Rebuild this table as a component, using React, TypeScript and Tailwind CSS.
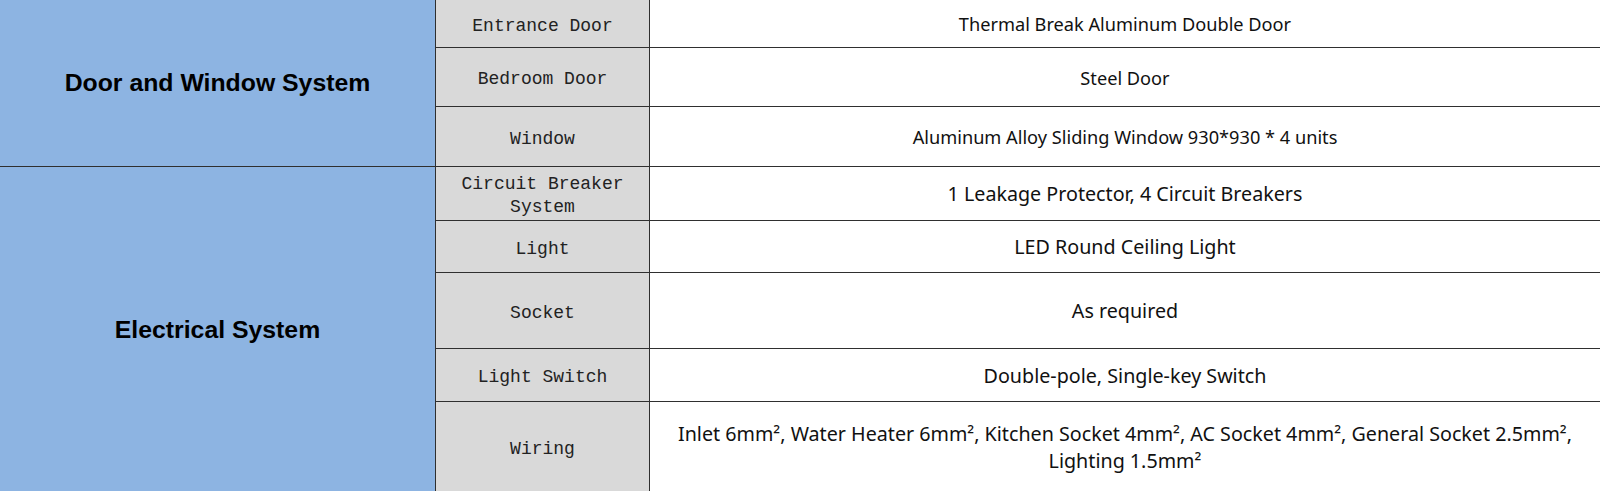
import React from 'react';

interface Row {
  label: string;
  value: string;
  height: string;
}

const doorRows: Row[] = [
  { label: 'Entrance Door', value: 'Thermal Break Aluminum Double Door', height: 'h-[48px]' },
  { label: 'Bedroom Door', value: 'Steel Door', height: 'h-[59px]' },
  { label: 'Window', value: 'Aluminum Alloy Sliding Window 930*930 * 4 units', height: 'h-[59px]' },
];

const electricalRows: Row[] = [
  { label: 'Circuit Breaker System', value: '1 Leakage Protector, 4 Circuit Breakers', height: 'h-[54px]' },
  { label: 'Light', value: 'LED Round Ceiling Light', height: 'h-[52px]' },
  { label: 'Socket', value: 'As required', height: 'h-[76px]' },
  { label: 'Light Switch', value: 'Double-pole, Single-key Switch', height: 'h-[53px]' },
  {
    label: 'Wiring',
    value: 'Inlet 6mm², Water Heater 6mm², Kitchen Socket 4mm², AC Socket 4mm², General Socket 2.5mm², Lighting 1.5mm²',
    height: 'h-[90px]',
  },
];

function Section({ title, rows, valueSize, last }: { title: string; rows: Row[]; valueSize: string; last?: boolean }) {
  return (
    <div className={`flex ${last ? '' : 'border-b border-[#2f2f2f]'}`}>
      <div className="w-[436px] shrink-0 flex items-center justify-center bg-[#8db4e2] border-r border-[#2f2f2f]">
        <h2 className="text-[24.8px] font-bold text-black font-['Liberation_Sans',Arial,sans-serif]">{title}</h2>
      </div>
      <div className="flex-1 flex flex-col">
        {rows.map((row, i) => {
          const isLast = i === rows.length - 1;
          return (
            <div key={row.label} className={`flex ${row.height} ${isLast ? '' : 'border-b border-[#2f2f2f]'}`}>
              <div className="w-[214px] shrink-0 flex items-center justify-center bg-[#d9d9d9] border-r border-[#2f2f2f] px-3 pt-[5px] text-center text-[18px] leading-[23px] text-[#222] font-['Liberation_Mono',monospace]">
                {row.label}
              </div>
              <div className={`flex-1 flex items-center justify-center px-[20px] text-center ${valueSize} leading-[27px] text-[#111] font-['Noto_Sans',sans-serif]`}>
                {row.value}
              </div>
            </div>
          );
        })}
      </div>
    </div>
  );
}

export default function App() {
  return (
    <div className="w-[1600px] h-[491px] bg-white overflow-hidden">
      <Section title="Door and Window System" rows={doorRows} valueSize="text-[18.2px] pt-[2px]" />
      <Section title="Electrical System" rows={electricalRows} valueSize="text-[19.7px]" last />
    </div>
  );
}
